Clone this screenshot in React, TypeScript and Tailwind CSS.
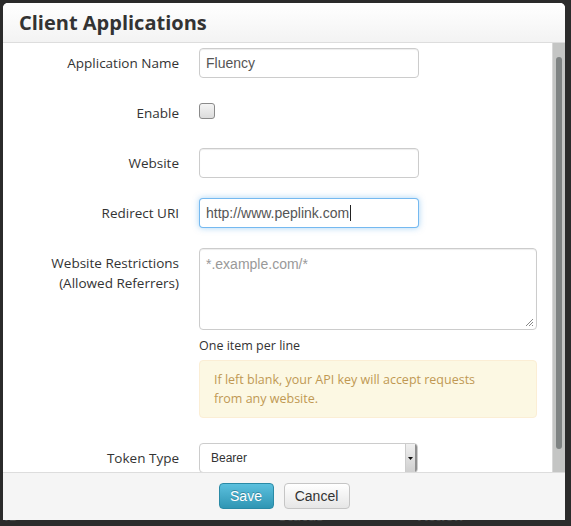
import React from "react";

const sans = { fontFamily: '"Open Sans", "Noto Sans", sans-serif' };
const arial = { fontFamily: '"Liberation Sans", Arial, sans-serif' };

function Row({ label, children, className = "" }: { label: React.ReactNode; children: React.ReactNode; className?: string }) {
  return (
    <div className={`grid grid-cols-[176px_1fr] gap-x-[20px] ${className}`}>
      <div className="pt-[5px] text-right text-[13.5px] leading-[20px] text-[#333]">{label}</div>
      <div>{children}</div>
    </div>
  );
}

function TextInput({ value, focused = false }: { value?: string; focused?: boolean }) {
  return (
    <div
      className={`flex h-[30px] w-[220px] items-center rounded-[4px] border bg-white px-[6px] text-[14px] text-[#555] ${
        focused
          ? "border-[rgba(82,168,236,0.8)] shadow-[0_0_6px_rgba(82,168,236,0.5)]"
          : "border-[#ccc] shadow-[inset_0_1px_1px_rgba(0,0,0,0.075)]"
      }`}
      style={arial}
    >
      <span>{value}</span>
      {focused && <span className="ml-[1px] inline-block h-[16px] w-[1px] bg-[#222]" />}
    </div>
  );
}

export default function App() {
  return (
    <div className="relative h-[526px] w-[571px] overflow-hidden bg-[#2b2b2b]" style={sans}>
      {/* page content behind the overlay */}
      <div className="flex h-full flex-col">
        <div className="h-[514px]" />
        <div className="flex h-[20px] items-center text-[14px] font-bold leading-[20px] text-[#4a4a4a]">
          <span className="ml-[4px] w-[228px]">ID</span>
          <span className="w-[12px] text-[#444]">≡</span>
          <span className="ml-[35px] w-[114px]">Status</span>
          <span className="w-[12px] text-[#444]">≡</span>
          <span className="ml-[13px]">Action</span>
        </div>
      </div>

      {/* modal */}
      <div className="absolute left-[3px] top-[3px] flex h-[517px] w-[562px] flex-col overflow-hidden rounded-t-[5px] bg-white">
        <div className="flex h-[40px] shrink-0 items-center border-b border-[#ddd] bg-gradient-to-b from-white to-[#f3f3f3] pl-[16px]">
          <h3 className="text-[20px] font-bold leading-[24px] text-[#333]">Client Applications</h3>
        </div>

        <div className="flex min-h-0 flex-1">
          <div className="min-w-0 flex-1 overflow-hidden pt-[5px]">
            <Row label="Application Name" className="mb-[20px]">
              <TextInput value="Fluency" />
            </Row>
            <div className="mb-[20px] grid h-[30px] grid-cols-[176px_1fr] items-center gap-x-[20px]">
              <div className="text-right text-[13.5px] leading-[20px] text-[#333]">Enable</div>
              <div className="mb-[4px] h-[16px] w-[16px] rounded-[3px] border border-[#8a8a8a] bg-gradient-to-b from-[#f4f4f4] to-[#dcdcdc]" />
            </div>
            <Row label="Website" className="mb-[20px]">
              <TextInput />
            </Row>
            <Row label="Redirect URI" className="mb-[20px]">
              <TextInput value="http://www.peplink.com" focused />
            </Row>
            <Row
              label={
                <>
                  Website Restrictions
                  <br />
                  (Allowed Referrers)
                </>
              }
            >
              <div className="relative h-[82px] w-[338px] rounded-[4px] border border-[#ccc] bg-white px-[6px] pt-[5px] text-[14px] leading-[20px] text-[#999] shadow-[inset_0_1px_1px_rgba(0,0,0,0.075)]" style={arial}>
                *.example.com/*
                <svg className="absolute bottom-[2px] right-[2px]" width="9" height="9" viewBox="0 0 9 9">
                  <path d="M8 1 L1 8 M8 4 L4 8 M8 7 L7 8" stroke="#888" strokeWidth="1" />
                </svg>
              </div>
              <div className="mt-[6px] text-[12.5px] leading-[20px] text-[#333]">One item per line</div>
              <div className="mt-[4px] w-[338px] rounded-[4px] border border-[#fbeed5] bg-[#fcf8e3] pb-[9px] pl-[14px] pt-[9px] text-[12.5px] leading-[19px] text-[#c09853]">
                If left blank, your API key will accept requests
                <br />
                from any website.
              </div>
            </Row>
            <Row label="Token Type" className="mt-[25px]">
              <div className="flex h-[30px] w-[219px] overflow-hidden rounded-[4px] border border-[#ccc] bg-white" style={arial}>
                <div className="flex flex-1 items-center pl-[11px] text-[12px] text-[#333]">Bearer</div>
                <div className="flex w-[12px] items-center justify-center border-l border-[#ccc] border-r-[2px] border-r-[#8f8f8f] bg-gradient-to-b from-[#f0f0f0] to-[#cfcfcf]">
                  <svg width="5" height="3" viewBox="0 0 5 3">
                    <path d="M0 0 H5 L2.5 3 Z" fill="#111" />
                  </svg>
                </div>
              </div>
            </Row>
          </div>
          <div className="flex w-[13px] shrink-0 justify-center border-l border-[#d8d8d8] bg-[#c4c5c4] pt-[14px]">
            <div className="h-[392px] w-[6px] rounded-full bg-[#7f8383]" />
          </div>
        </div>

        <div className="flex h-[48px] shrink-0 justify-center gap-[10px] border-t border-[#ddd] bg-[#f5f5f5] pt-[10px]" style={arial}>
          <button className="h-[26px] w-[55px] rounded-[4px] border border-[#2a8aa6] bg-gradient-to-b from-[#5bc0de] to-[#2f96b4] text-[14px] text-white [text-shadow:0_-1px_0_rgba(0,0,0,0.25)]">
            Save
          </button>
          <button className="h-[26px] w-[66px] rounded-[4px] border border-[#c5c5c5] bg-gradient-to-b from-white to-[#e6e6e6] text-[14px] text-[#333]">
            Cancel
          </button>
        </div>
      </div>
    </div>
  );
}
